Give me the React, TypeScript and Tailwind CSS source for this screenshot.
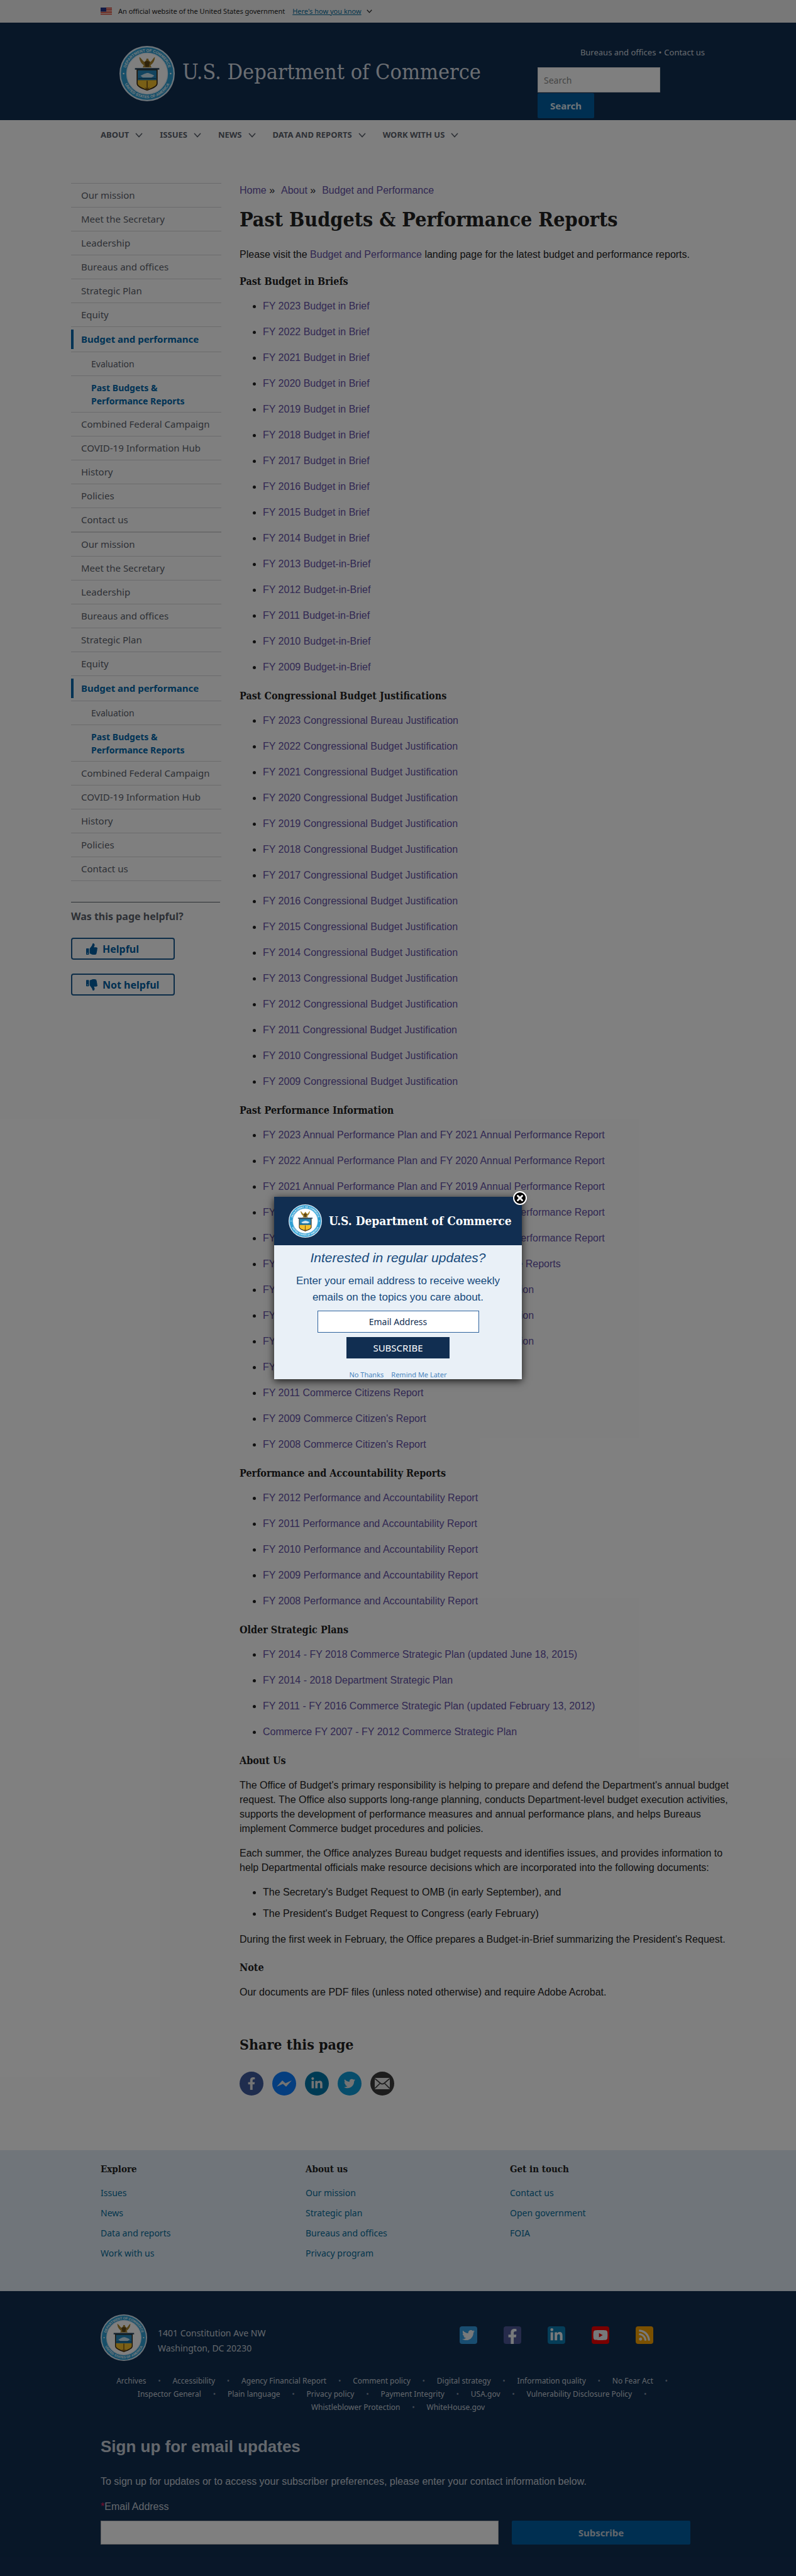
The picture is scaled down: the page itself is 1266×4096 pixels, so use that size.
import { useId } from "react";
import {
  FaFacebookF,
  FaLinkedinIn,
  FaRss,
  FaThumbsDown,
  FaThumbsUp,
  FaTwitter,
  FaYoutube,
} from "react-icons/fa";
import { X } from "lucide-react";

const serif = "font-['DejaVu_Serif_Condensed','DejaVu_Serif',serif]";
const sans = "font-['Noto_Sans',sans-serif]";
const container = "mx-auto w-full max-w-[946px]";

const briefs = Array.from({ length: 15 }, (_, i) => {
  const year = 2023 - i;
  return year > 2013 ? `FY ${year} Budget in Brief` : `FY ${year} Budget-in-Brief`;
});

const justifications = Array.from({ length: 15 }, (_, i) =>
  i === 0 ? "FY 2023 Congressional Bureau Justification" : `FY ${2023 - i} Congressional Budget Justification`,
);

const performance = [
  "FY 2023 Annual Performance Plan and FY 2021 Annual Performance Report",
  "FY 2022 Annual Performance Plan and FY 2020 Annual Performance Report",
  "FY 2021 Annual Performance Plan and FY 2019 Annual Performance Report",
  "FY 2020 Annual Performance Plan and FY 2018 Annual Performance Report",
  "FY 2019 Annual Performance Plan and FY 2017 Annual Performance Report",
  "FY 2018 Annual Performance Plan and 2016 Performance Reports",
  "FY 2015 Summary of Performance and Financial Information",
  "FY 2014 Summary of Performance and Financial Information",
  "FY 2013 Summary of Performance and Financial Information",
  "FY 2012 Commerce Citizens Report",
  "FY 2011 Commerce Citizens Report",
  "FY 2009 Commerce Citizen's Report",
  "FY 2008 Commerce Citizen's Report",
];

const accountability = [2012, 2011, 2010, 2009, 2008].map(
  (year) => `FY ${year} Performance and Accountability Report`,
);

const strategic = [
  "FY 2014 - FY 2018 Commerce Strategic Plan (updated June 18, 2015)",
  "FY 2014 - 2018 Department Strategic Plan",
  "FY 2011 - FY 2016 Commerce Strategic Plan (updated February 13, 2012)",
  "Commerce FY 2007 - FY 2012 Commerce Strategic Plan",
];

const sections = [
  { title: "Past Budget in Briefs", items: briefs },
  { title: "Past Congressional Budget Justifications", items: justifications },
  { title: "Past Performance Information", items: performance },
  { title: "Performance and Accountability Reports", items: accountability },
  { title: "Older Strategic Plans", items: strategic },
];

const footerColumns = [
  { title: "Explore", links: ["Issues", "News", "Data and reports", "Work with us"] },
  { title: "About us", links: ["Our mission", "Strategic plan", "Bureaus and offices", "Privacy program"] },
  { title: "Get in touch", links: ["Contact us", "Open government", "FOIA"] },
];

const footerLinks = [
  "Archives",
  "Accessibility",
  "Agency Financial Report",
  "Comment policy",
  "Digital strategy",
  "Information quality",
  "No Fear Act",
  "Inspector General",
  "Plain language",
  "Privacy policy",
  "Payment Integrity",
  "USA.gov",
  "Vulnerability Disclosure Policy",
  "Whistleblower Protection",
  "WhiteHouse.gov",
];

function Seal({ className }: { className: string }) {
  const id = useId();
  return (
    <svg viewBox="0 0 100 100" className={className} aria-hidden="true">
      <defs>
        <path id={`${id}t`} d="M10.5 50a39.5 39.5 0 0 1 79 0" />
        <path id={`${id}b`} d="M5.5 50a44.5 44.5 0 0 0 89 0" />
      </defs>
      <circle cx="50" cy="50" r="50" fill="#dceaf5" />
      <circle cx="50" cy="50" r="47.5" fill="#2f9fd3" />
      <circle cx="50" cy="50" r="37" fill="#ffffff" stroke="#dceaf5" strokeWidth="1.5" />
      <g fill="#eaf6fc" fontSize="7" fontWeight="700" fontFamily="Liberation Sans, sans-serif" textAnchor="middle">
        <text>
          <textPath href={`#${id}t`} startOffset="50%">DEPARTMENT OF COMMERCE</textPath>
        </text>
        <text>
          <textPath href={`#${id}b`} startOffset="50%">UNITED STATES OF AMERICA</textPath>
        </text>
      </g>
      <circle cx="7.5" cy="50" r="1.4" fill="#fff" />
      <circle cx="92.5" cy="50" r="1.4" fill="#fff" />
      <path
        d="M36 20c3 2 6 7 9 9l3-3 1-3h3l1 3 3 3c3-2 5-7 8-9 0 6-3 12-8 15l2 4H42l2-4c-5-3-8-9-8-15z"
        fill="#a8842c"
      />
      <path d="M45 29l5-2 5 2-2 9h-6z" fill="#5f4716" />
      <path d="M31 42h38v26c0 5-6 9-19 13-13-4-19-8-19-13z" fill="#3a2a14" />
      <path d="M28 40h44v3H28z" fill="#24435c" />
      <path d="M33 44h34v18H33z" fill="#2488bf" />
      <path d="M33 62h34v6c0 4-6 7-17 11-11-4-17-7-17-11z" fill="#f3bf2d" />
      <path d="M38 54c5-2 8-5 14-5l8 3 3 2-5 3H42z" fill="#cfe6f2" />
      <path d="M34 59h32" stroke="#12496b" strokeWidth="1.5" />
      <path d="M49 63h2v13h-2zM45 74q5 5 10 0l-5 7z" fill="#7b5616" />
    </svg>
  );
}

function Flag() {
  return (
    <svg viewBox="0 0 18 12" className="h-3 w-[18px]" aria-hidden="true">
      <path d="M0 0h18v12H0z" fill="#f3e7e2" />
      <path d="M0 .8h18M0 3.2h18M0 5.6h18M0 8h18M0 10.6h18" stroke="#d9412f" strokeWidth="1.4" />
      <path d="M0 0h9v6.5H0z" fill="#27348b" />
    </svg>
  );
}

function Chevron({ className }: { className: string }) {
  return (
    <svg viewBox="0 0 12 8" className={className} fill="none" stroke="currentColor" strokeWidth="1.6" aria-hidden="true">
      <path d="M1 1l5 5.5L11 1" />
    </svg>
  );
}

function SideNav({ label }: { label: string }) {
  const row = "flex h-[38px] items-center border-b border-[#d6d7d9] pl-4";
  return (
    <nav aria-label={label} className="border-t border-[#d6d7d9] text-[#5b616b]">
      <ul>
        {["Our mission", "Meet the Secretary", "Leadership", "Bureaus and offices", "Strategic Plan", "Equity"].map(
          (name) => (
            <li key={name} className={row}>
              <a href="#">{name}</a>
            </li>
          ),
        )}
        <li>
          <div className="flex h-10 items-center border-b border-[#d6d7d9]">
            <a href="#" className="border-l-4 border-[#0067ab] py-1 pl-3 font-bold text-[#0067ab]">
              Budget and performance
            </a>
          </div>
          <ul className="text-sm">
            <li className="flex h-[38px] items-center border-b border-[#d6d7d9] pl-8">
              <a href="#">Evaluation</a>
            </li>
            <li className="flex h-[58px] items-center border-b border-[#d6d7d9] pr-12 pl-8">
              <a href="#" className="leading-[21px] font-bold text-[#0067ab]">
                Past Budgets &amp; Performance Reports
              </a>
            </li>
          </ul>
        </li>
        {["Combined Federal Campaign", "COVID-19 Information Hub", "History", "Policies", "Contact us"].map((name) => (
          <li key={name} className={row}>
            <a href="#">{name}</a>
          </li>
        ))}
      </ul>
    </nav>
  );
}

function ShareLinks() {
  const circle = "flex size-[38px] items-center justify-center rounded-full text-[#e8e8e8]";
  return (
    <div className="flex gap-[14px]">
      <a href="#" aria-label="Share on Facebook" className={`${circle} bg-[#3f5a9d]`}>
        <FaFacebookF className="size-5" />
      </a>
      <a href="#" aria-label="Share on Messenger" className={`${circle} bg-[#0a7cff]`}>
        <svg viewBox="0 0 24 12" className="h-3 w-6" fill="currentColor" aria-hidden="true">
          <path d="M0 11L9 1l5 4.6L24 1 15 11l-5-4.6z" />
        </svg>
      </a>
      <a href="#" aria-label="Share on LinkedIn" className={`${circle} bg-[#0077a8]`}>
        <FaLinkedinIn className="size-5" />
      </a>
      <a href="#" aria-label="Share on Twitter" className={`${circle} bg-[#0f9bd7]`}>
        <FaTwitter className="size-[18px]" />
      </a>
      <a href="#" aria-label="Share by email" className={`${circle} bg-[#3a3a3a]`}>
        <svg viewBox="0 0 24 18" className="h-[18px] w-6" aria-hidden="true">
          <path d="M0 0h24v18H0z" fill="currentColor" />
          <path d="M0 1l9 7.5q3 2.4 6 0L24 1M0 17l8-8M24 17l-8-8" fill="none" stroke="#3a3a3a" strokeWidth="1.7" />
        </svg>
      </a>
    </div>
  );
}

function Modal() {
  return (
    <div className="absolute inset-0 flex items-center justify-center bg-black/50">
      <div role="dialog" aria-label="Email updates" className="relative w-[394px] shadow-[0_3px_12px_rgba(0,0,0,0.8)]">
        <button
          type="button"
          aria-label="Close"
          className="absolute -top-[9px] -right-2 flex size-[22px] items-center justify-center rounded-full border-2 border-white bg-black text-white shadow"
        >
          <X className="size-[14px]" strokeWidth={5} />
        </button>
        <div className="flex h-[77px] items-center gap-[11px] bg-[#112e51] pl-[23px]">
          <Seal className="size-[53px]" />
          <p className={`${serif} text-[19px] font-bold whitespace-nowrap text-white`}>U.S. Department of Commerce</p>
        </div>
        <div className="flex h-[213px] flex-col items-center bg-[#e9f0f7] pt-2 text-center text-[#174a7c]">
          <h2 className="text-[21px] leading-6 italic">Interested in regular updates?</h2>
          <p className="mt-3 w-[340px] text-[17px] leading-[26px]">
            Enter your email address to receive weekly emails on the topics you care about.
          </p>
          <input
            type="email"
            aria-label="Email Address"
            placeholder="Email Address"
            className={`${sans} mt-2 h-[35px] w-[257px] shrink-0 border border-[#2f629c] bg-white text-center text-sm placeholder:text-[#112e51]`}
          />
          <button type="button" className={`${sans} mt-[7px] h-[34px] w-[164px] shrink-0 bg-[#112e51] text-[15px] text-white`}>
            SUBSCRIBE
          </button>
          <div className={`${sans} mt-5 flex gap-3 text-[11px] leading-3 text-[#4a86c0]`}>
            <a href="#">No Thanks</a>
            <a href="#">Remind Me Later</a>
          </div>
        </div>
      </div>
    </div>
  );
}

export default function App() {
  const square = "flex size-7 items-center justify-center rounded-sm text-[#eef2f6]";
  const link = "text-[#6450a6]";
  return (
    <div className="relative flex min-h-screen flex-col bg-white font-['Liberation_Sans',Arial,sans-serif] text-base text-[#212121]">
      <div className="bg-[#f1f1f1]">
        <div className={`${container} ${sans} flex h-9 items-center text-[11px]`}>
          <Flag />
          <span className="ml-[10px]">An official website of the United States government</span>
          <button type="button" className="ml-3 flex items-center gap-2">
            <span className="text-[#046b99] underline">Here's how you know</span>
            <Chevron className="h-[6px] w-[9px]" />
          </button>
        </div>
      </div>

      <header className={`${sans} bg-[#112e51]`}>
        <div className={`${container} flex h-[155px] justify-between pl-[30px]`}>
          <a href="#" className="flex items-start gap-3 pt-[37px]">
            <Seal className="size-[88px] shrink-0" />
            <span className={`${serif} mt-[21px] text-[34px] leading-10 whitespace-nowrap text-[#d7dde5]`}>
              U.S. Department of Commerce
            </span>
          </a>
          <div className="mr-[-15px] w-[266px] pt-[37px]">
            <div className="flex justify-end gap-1 text-[13px] leading-5 text-[#cfd6df]">
              <a href="#">Bureaus and offices</a>
              <span>•</span>
              <a href="#">Contact us</a>
            </div>
            <form className="mt-[14px]">
              <input
                type="search"
                aria-label="Search"
                placeholder="Search"
                className="block h-10 w-[195px] border border-[#e0e0e0] bg-white px-[9px] text-sm placeholder:text-[#8a8a8a]"
              />
              <button type="button" className="mt-px h-10 w-[90px] rounded-xs bg-[#005ea2] text-[15px] font-bold text-[#dfe8f0]">
                Search
              </button>
            </form>
          </div>
        </div>
      </header>

      <nav aria-label="Primary" className={`${container} ${sans} h-[50px] pt-3 text-[13px] font-bold text-[#5b616b]`}>
        <ul className="flex gap-[27px]">
          {["ABOUT", "ISSUES", "NEWS", "DATA AND REPORTS", "WORK WITH US"].map((name) => (
            <li key={name}>
              <button type="button" className="flex h-6 items-center gap-[10px]">
                {name}
                <Chevron className="h-2 w-3" />
              </button>
            </li>
          ))}
        </ul>
      </nav>

      <main className="mx-auto flex w-full max-w-[1040px] gap-[29px] pt-[50px]">
        <aside className={`${sans} w-[239px] shrink-0 text-[15px]`}>
          <SideNav label="Section" />
          <SideNav label="Section menu" />
          <hr className="mt-[33px] mr-[2px] border-[#5b616b]" />
          <h2 className="mt-2 text-base leading-7 font-bold text-[#5b616b]">Was this page helpful?</h2>
          <div className="mt-5 flex w-[165px] flex-col gap-[22px] text-base font-bold text-[#005ea2]">
            <button type="button" className="flex h-[35px] items-center gap-2 rounded border-2 border-[#1a5a90] pl-[22px]">
              <FaThumbsUp className="size-[18px]" />
              Helpful
            </button>
            <button type="button" className="flex h-[35px] items-center gap-2 rounded border-2 border-[#1a5a90] pl-[22px]">
              <FaThumbsDown className="size-[18px]" />
              Not helpful
            </button>
          </div>
        </aside>

        <article className="-mr-4 min-w-0 flex-1">
          <nav aria-label="Breadcrumb" className="flex gap-[10px] leading-6">
            <span>
              <a href="#" className={link}>Home</a> »
            </span>
            <span>
              <a href="#" className={link}>About</a> »
            </span>
            <a href="#" className={link}>Budget and Performance</a>
          </nav>
          <h1 className={`${serif} mt-[14px] text-[32px] leading-10 font-bold`}>Past Budgets &amp; Performance Reports</h1>
          <p className="mt-6 leading-6">
            Please visit the{" "}
            <a href="#" className={link}>Budget and Performance</a> landing page for the latest budget and
            performance reports.
          </p>
          <div className="mt-[19px]">
            {sections.map((section) => (
              <section key={section.title} className="mb-[22px]">
                <h2 className={`${serif} mb-[15px] leading-6 font-bold`}>{section.title}</h2>
                <ul className="flex list-disc flex-col gap-[17px] pl-[37px]">
                  {section.items.map((item) => (
                    <li key={item} className="leading-6">
                      <a href="#" className={link}>{item}</a>
                    </li>
                  ))}
                </ul>
              </section>
            ))}
          </div>
          <section className="leading-[23px]">
            <h2 className={`${serif} mb-[15px] leading-6 font-bold`}>About Us</h2>
            <p className="mb-4">
              The Office of Budget's primary responsibility is helping to prepare and defend the Department's annual
              budget request. The Office also supports long-range planning, conducts Department-level budget execution
              activities, supports the development of performance measures and annual performance plans, and helps
              Bureaus implement Commerce budget procedures and policies.
            </p>
            <p className="mb-4">
              Each summer, the Office analyzes Bureau budget requests and identifies issues, and provides information
              to help Departmental officials make resource decisions which are incorporated into the following
              documents:
            </p>
            <ul className="mb-[18px] flex list-disc flex-col gap-[11px] pl-[37px]">
              <li>The Secretary's Budget Request to OMB (in early September), and</li>
              <li>The President's Budget Request to Congress (early February)</li>
            </ul>
            <p className="mb-[22px]">
              During the first week in February, the Office prepares a Budget-in-Brief summarizing the President's
              Request.
            </p>
            <h2 className={`${serif} mb-[15px] leading-6 font-bold`}>Note</h2>
            <p>Our documents are PDF files (unless noted otherwise) and require Adobe Acrobat.</p>
          </section>
          <section className="mt-14 pb-[87px]">
            <h2 className={`${serif} mb-[27px] text-[23px] leading-8 font-bold`}>Share this page</h2>
            <ShareLinks />
          </section>
        </article>
      </main>

      <footer className={`${sans} flex flex-1 flex-col`}>
        <div className="bg-[#e0ebf5]">
          <div className={`${container} grid h-[224px] grid-cols-[326px_325px_1fr] pt-[18px]`}>
            {footerColumns.map((column) => (
              <div key={column.title}>
                <h2 className={`${serif} text-[15px] leading-6 font-bold`}>{column.title}</h2>
                <ul className="mt-[14px] flex flex-col gap-2 text-sm leading-6 text-[#046b99]">
                  {column.links.map((name) => (
                    <li key={name}>
                      <a href="#">{name}</a>
                    </li>
                  ))}
                </ul>
              </div>
            ))}
          </div>
        </div>

        <div className="flex-1 bg-[#112e51] pb-[50px] text-[#c6ced8]">
          <div className={container}>
            <div className="flex items-start pt-[37px]">
              <Seal className="size-[74px]" />
              <address className="mt-[18px] ml-[17px] flex-1 text-sm leading-6 not-italic">
                1401 Constitution Ave NW
                <br />
                Washington, DC 20230
              </address>
              <div className="mt-[19px] mr-[67px] flex gap-[42px]">
                <a href="#" aria-label="Twitter" className={`${square} bg-[#329ae0]`}>
                  <FaTwitter className="size-5" />
                </a>
                <a href="#" aria-label="Facebook" className="flex size-7 items-end justify-center rounded-sm bg-[#4c5796] text-[#eef2f6]">
                  <FaFacebookF className="size-6" />
                </a>
                <a href="#" aria-label="LinkedIn" className={`${square} bg-[#0a7bb0]`}>
                  <FaLinkedinIn className="size-[22px]" />
                </a>
                <a href="#" aria-label="YouTube" className={`${square} bg-[#f20000]`}>
                  <FaYoutube className="size-6" />
                </a>
                <a href="#" aria-label="RSS" className={`${square} bg-[#f5a100]`}>
                  <FaRss className="size-5" />
                </a>
              </div>
            </div>
            <ul className="mt-[21px] flex flex-wrap justify-center text-[12px] leading-[21px]">
              {footerLinks.map((name, i) => (
                <li key={name} className="flex">
                  <a href="#">{name}</a>
                  {i < footerLinks.length - 1 && <span className="w-[42px] text-center text-[#7f8fa3]">•</span>}
                </li>
              ))}
            </ul>
            <form className="mt-8 font-['Liberation_Sans',Arial,sans-serif]">
              <h2 className="text-[26px] leading-10 font-bold">Sign up for email updates</h2>
              <p className="mt-6 leading-6">
                To sign up for updates or to access your subscriber preferences, please enter your contact information
                below.
              </p>
              <label htmlFor="footer-email" className="mt-4 block leading-6">
                <span className="text-[#e31c5f]">*</span>Email Address
              </label>
              <div className="mt-[10px] flex gap-[21px]">
                <input id="footer-email" type="email" className="h-[38px] w-[633px] border border-[#c0c0c0] bg-white px-2" />
                <button type="button" className={`${sans} h-[38px] w-[284px] rounded-xs bg-[#005ea2] text-[15px] font-bold`}>
                  Subscribe
                </button>
              </div>
            </form>
          </div>
        </div>
      </footer>

      <Modal />
    </div>
  );
}
